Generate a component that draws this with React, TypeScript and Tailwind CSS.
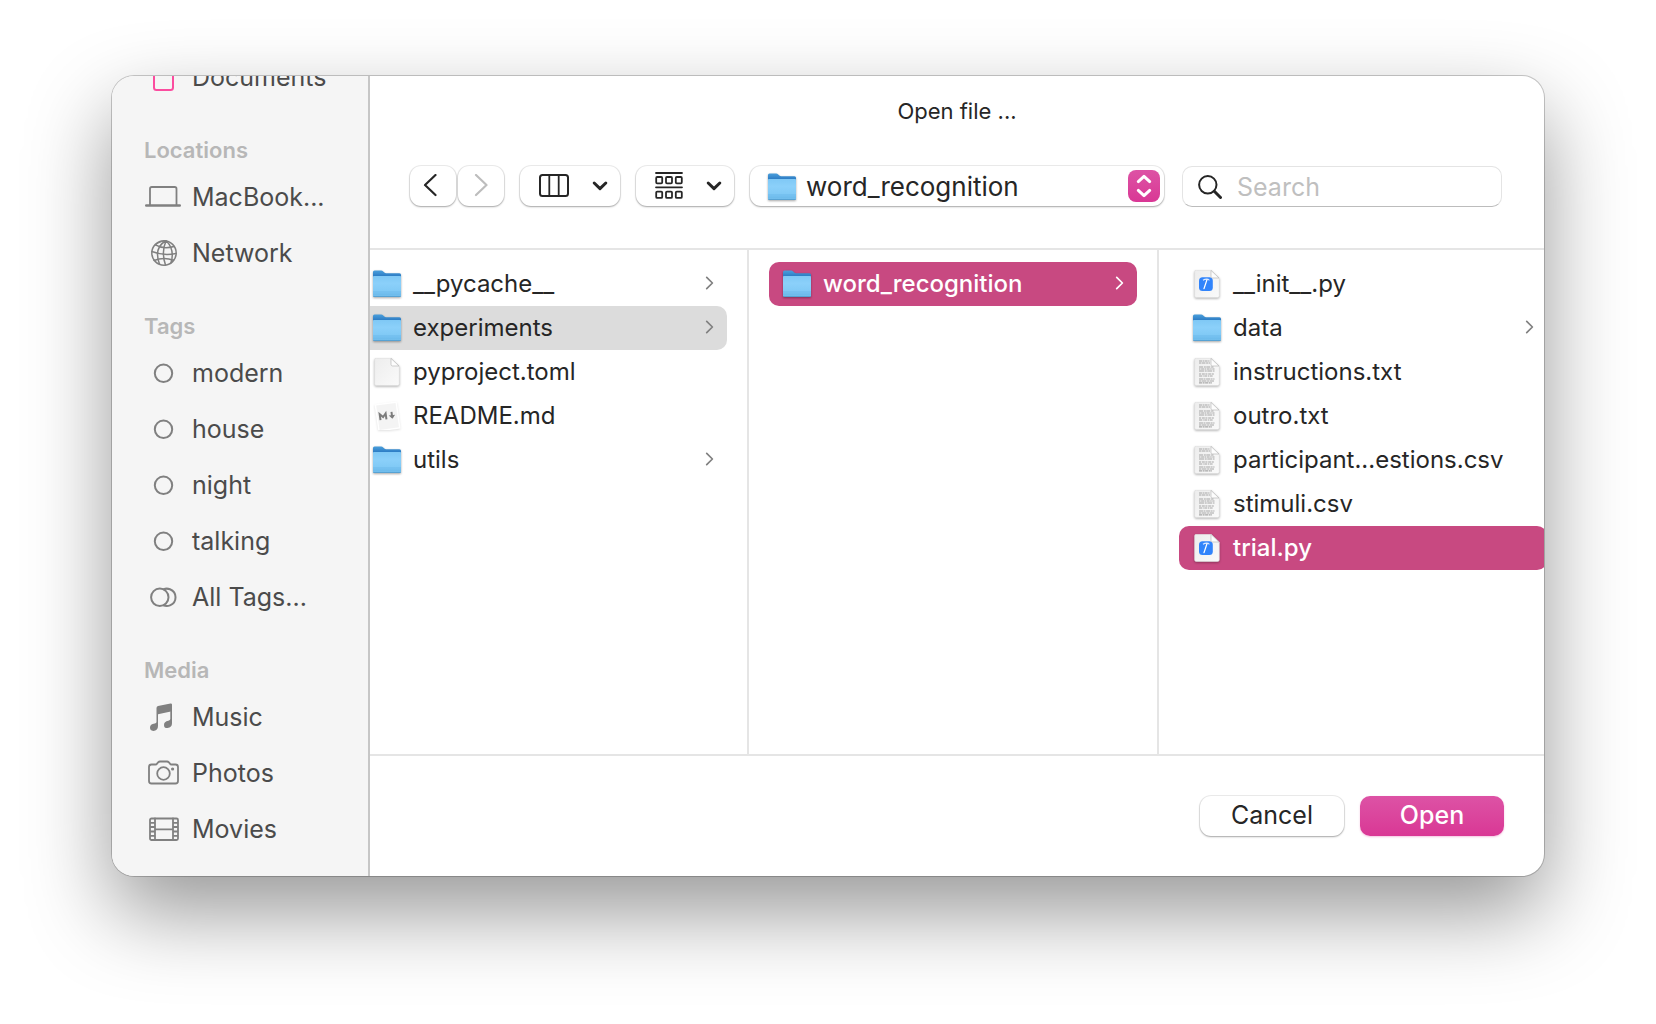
import type { ReactNode } from "react";

type FileKind = "folder" | "blank" | "markdown" | "text" | "python";

interface Entry {
  name: string;
  kind: FileKind;
  state?: "active" | "path";
}

const columns: Entry[][] = [
  [
    { name: "__pycache__", kind: "folder" },
    { name: "experiments", kind: "folder", state: "path" },
    { name: "pyproject.toml", kind: "blank" },
    { name: "README.md", kind: "markdown" },
    { name: "utils", kind: "folder" },
  ],
  [{ name: "word_recognition", kind: "folder", state: "active" }],
  [
    { name: "__init__.py", kind: "python" },
    { name: "data", kind: "folder" },
    { name: "instructions.txt", kind: "text" },
    { name: "outro.txt", kind: "text" },
    { name: "participant...estions.csv", kind: "text" },
    { name: "stimuli.csv", kind: "text" },
    { name: "trial.py", kind: "python", state: "active" },
  ],
];

function FolderIcon() {
  return (
    <svg viewBox="0 0 28 28" className="size-7 shrink-0 drop-shadow-[0_1px_1px_rgba(0,0,0,0.35)]" aria-hidden="true">
      <defs>
        <linearGradient id="folder-back" x1="0" y1="0" x2="0" y2="1">
          <stop offset="0" stopColor="#4a9fdc" />
          <stop offset="0.45" stopColor="#2f7fc6" />
        </linearGradient>
        <linearGradient id="folder-front" x1="0" y1="0" x2="0" y2="1">
          <stop offset="0" stopColor="#7fc8f5" />
          <stop offset="0.35" stopColor="#8bd0fa" />
          <stop offset="0.8" stopColor="#7ec8f5" />
          <stop offset="1" stopColor="#6ab8e8" />
        </linearGradient>
      </defs>
      <path d="M0 2Q0 .5 1.500 .5H8.200Q9.300 .5 10.200 1.400L11.300 2.600Q12 3.300 13.200 3.300H26.500Q28 3.300 28 4.800V12H0Z" fill="url(#folder-back)" />
      <path d="M0 6.800Q0 6 .8 6H27.200Q28 6 28 6.800V25.500Q28 27 26.500 27H1.500Q0 27 0 25.500Z" fill="url(#folder-front)" />
      <path d="M0 22H28M0 24H28" stroke="#5fb0e4" strokeWidth=".6" />
      <path d="M.3 26.600H27.700" stroke="#4b93c6" strokeWidth=".7" />
    </svg>
  );
}

function Page({ children }: { children?: ReactNode }) {
  return (
    <svg viewBox="0 0 28 28" className="size-7 shrink-0 drop-shadow-[0_1px_1px_rgba(0,0,0,0.3)]" aria-hidden="true">
      <defs>
        <linearGradient id="page-fill" x1="0" y1="0" x2="1" y2="1">
          <stop offset="0" stopColor="#ededed" />
          <stop offset="1" stopColor="#fafafa" />
        </linearGradient>
      </defs>
      <path
        d="M3.200 .2H18L26.300 8V25.800Q26.300 27.500 24.600 27.500H3.200Q1.600 27.500 1.600 25.800V1.900Q1.600 .2 3.200 .2Z"
        fill="url(#page-fill)"
        stroke="#dedede"
        strokeWidth=".6"
      />
      {children}
      <path d="M18 .4V6.400Q18 8 19.600 8H26Z" fill="#fdfdfd" stroke="#b9b9b9" strokeWidth=".7" strokeLinejoin="round" />
    </svg>
  );
}

function FileIcon({ kind }: { kind: FileKind }) {
  switch (kind) {
    case "folder":
      return <FolderIcon />;
    case "blank":
      return <Page />;
    case "text":
      return (
        <Page>
          <g stroke="#a6a6a6" strokeWidth="1.200">
            <path d="M6 3H16.500" strokeDasharray="3 .6 1.500 .5" />
            <path d="M6 5H17" strokeDasharray="2 .5 4 .6" />
            <path d="M6 9H21" strokeDasharray="4 .8 2 .5" />
            <path d="M6 11H21.500" strokeDasharray="1.500 .6 3 .5" />
            <path d="M6 13H21.500" strokeDasharray="5 .7 2 .6" />
            <path d="M6 16H21.500" strokeDasharray="2 .8 3 .6" />
            <path d="M6 18H20" strokeDasharray="3 .7 1 .6" />
            <path d="M6 21H21.500" strokeDasharray="4 .5 2 .6" />
            <path d="M6 23H21" strokeDasharray="2 .5 5 .6" />
            <path d="M6 24.800H19" strokeDasharray="3 .6 2 .5" />
          </g>
        </Page>
      );
    case "python":
      return (
        <Page>
          <rect x="6" y="7.200" width="13.800" height="13.800" rx="3.500" fill="#3184fb" />
          <path d="M10 10.200Q12 8.800 15.200 9.200L16.400 10.400" fill="none" stroke="#dfeaff" strokeWidth="1.100" />
          <path d="M14 9.600L11 18.600" stroke="#fff" strokeWidth="1.300" strokeLinecap="round" />
        </Page>
      );
    case "markdown":
      return (
        <svg viewBox="0 0 28 28" className="size-7 shrink-0 drop-shadow-[0_1px_1px_rgba(0,0,0,0.12)]" aria-hidden="true">
          <g transform="rotate(-8 14 14)">
            <rect x="4" y="1.500" width="21" height="26" fill="#f4f4f4" stroke="#fff" strokeWidth="1.400" />
            <path d="M7 17.200V11.200L10 14.400L13 11.200V17.200" fill="none" stroke="#7c7c7c" strokeWidth="2" />
            <path d="M19 10.500V16" fill="none" stroke="#7c7c7c" strokeWidth="2" />
            <path d="M15.800 13.800H22.200L19 17.600Z" fill="#7c7c7c" />
          </g>
        </svg>
      );
  }
}

function Row({ entry }: { entry: Entry }) {
  const tone =
    entry.state === "active"
      ? "bg-[#c84981] font-medium text-white"
      : entry.state === "path"
        ? "bg-[#dcdcdc] text-[#262626]"
        : "text-[#262626]";
  const arrow = entry.state === "active" ? "text-white" : "text-[#808080]";
  return (
    <li>
      <button
        type="button"
        className={`flex h-11 w-full items-center gap-3 rounded-[10px] pr-3 pl-3.5 text-left text-[24px] leading-7 whitespace-nowrap ${tone}`}
      >
        <FileIcon kind={entry.kind} />
        <span className="flex-1">{entry.name}</span>
        {entry.kind === "folder" && (
          <svg viewBox="0 0 12 16" className={`h-4 w-3 ${arrow}`} fill="none" stroke="currentColor" strokeWidth="1.700" aria-hidden="true">
            <path d="M3.700 1.300L9.400 7L3.700 12.700" strokeLinecap="round" strokeLinejoin="round" />
          </svg>
        )}
      </button>
    </li>
  );
}

const line = { fill: "none", stroke: "currentColor", strokeLinecap: "round", strokeLinejoin: "round" } as const;

function SideSvg({ children }: { children: ReactNode }) {
  return (
    <svg viewBox="0 0 36 30" className="h-[30px] w-9 shrink-0" aria-hidden="true">
      {children}
    </svg>
  );
}

const DocumentIcon = () => (
  <SideSvg>
    <rect x="9" y="2" width="19" height="26" rx="2.500" {...line} stroke="#fb4d9f" strokeWidth="2" />
  </SideSvg>
);
const LaptopIcon = () => (
  <SideSvg>
    <path d="M5 23V6.800Q5 5 6.800 5H29.700Q31.500 5 31.500 6.800V23" {...line} strokeWidth="1.800" />
    <path d="M1.200 23.500H34.800" {...line} strokeWidth="2.400" />
  </SideSvg>
);
const GlobeIcon = () => (
  <SideSvg>
    <g {...line} strokeWidth="1.500">
      <circle cx="19" cy="15" r="12.200" />
      <path d="M10.500 6.800Q18 11.500 29 8.500M6.800 13.500Q18 18 31 15.500M9 22.500Q19 18.500 28.500 22.300" />
      <path d="M20.500 3Q8.500 10 14.500 26.200M21 3Q16 14 20.500 27M21.500 3Q30 12 26 24.500" />
      <path d="M20 3Q13 4 10.500 6.800" strokeWidth="1.200" />
    </g>
  </SideSvg>
);
const TagIcon = () => (
  <SideSvg>
    <circle cx="18.500" cy="15.300" r="8.700" {...line} strokeWidth="2" />
  </SideSvg>
);
const AllTagsIcon = () => (
  <SideSvg>
    <circle cx="14.800" cy="15.300" r="8.700" {...line} strokeWidth="2" />
    <path d="M18.500 7.300Q21.500 6 25 7.200A8.700 8.700 0 0 1 25 23.400Q21.500 24.700 18.500 23.300" {...line} strokeWidth="2" />
  </SideSvg>
);
const MusicIcon = () => (
  <SideSvg>
    <path d="M11.500 6Q11.500 4.300 13 4L25.500 1.400Q27 1.200 27 2.600V9.300L13 12.300V24Q13 28.800 8.300 28.900Q5 28.900 5 25.600Q5 22 9.700 21.500Q11.500 21.300 11.500 20Z" fill="currentColor" />
    <path d="M25.300 8L27 8V21.300Q27 25.500 22.500 26.100Q19 26.200 19 22.900Q19 19.400 23.400 18.700Q25.300 18.400 25.300 17Z" fill="currentColor" />
  </SideSvg>
);
const CameraIcon = () => (
  <SideSvg>
    <g {...line} strokeWidth="1.800">
      <path d="M6.500 6.500H10.500Q11.500 6.500 12 5.700L13 4.500Q14 3.500 15 3.500H22Q23 3.500 24 4.500L25 5.700Q25.500 6.500 26.500 6.500H30.500Q33 6.500 33 9V23Q33 25.500 30.500 25.500H6.500Q4 25.500 4 23V9Q4 6.500 6.500 6.500Z" />
      <circle cx="18.500" cy="15.500" r="6.300" />
    </g>
    <circle cx="27.600" cy="11" r="1.600" fill="currentColor" />
  </SideSvg>
);
const FilmIcon = () => (
  <SideSvg>
    <g {...line} strokeWidth="1.800">
      <rect x="5" y="4.500" width="28" height="21.500" rx="1.500" />
      <path d="M10 4.500V26M28 4.500V26M10 15.300H28" />
      <path d="M5 8.800H10M5 13H10M5 17.500H10M5 21.800H10M28 8.800H33M28 13H33M28 17.500H33M28 21.800H33" strokeLinecap="butt" />
    </g>
  </SideSvg>
);

const sections: { title?: string; items: { label: string; Icon: () => ReactNode }[] }[] = [
  { items: [{ label: "Documents", Icon: DocumentIcon }] },
  {
    title: "Locations",
    items: [
      { label: "MacBook...", Icon: LaptopIcon },
      { label: "Network", Icon: GlobeIcon },
    ],
  },
  {
    title: "Tags",
    items: [
      { label: "modern", Icon: TagIcon },
      { label: "house", Icon: TagIcon },
      { label: "night", Icon: TagIcon },
      { label: "talking", Icon: TagIcon },
      { label: "All Tags...", Icon: AllTagsIcon },
    ],
  },
  {
    title: "Media",
    items: [
      { label: "Music", Icon: MusicIcon },
      { label: "Photos", Icon: CameraIcon },
      { label: "Movies", Icon: FilmIcon },
    ],
  },
];

/* The list is scrolled to its end, so the first entry is partly hidden. */
function Sidebar() {
  return (
    <nav
      aria-label="Favourites"
      className="flex w-[258px] shrink-0 flex-col justify-end overflow-hidden border-r-2 border-[#c6c6c6] bg-[#f5f5f5] pb-[19px] pl-8"
    >
      {sections.map((section) => (
        <section key={section.title ?? "top"}>
          {section.title && (
            <h2 className="flex h-16 items-end pb-[5px] text-[22px] leading-7 font-semibold text-[#b7b7b7]">{section.title}</h2>
          )}
          <ul>
            {section.items.map(({ label, Icon }) => (
              <li key={label}>
                <button type="button" className="flex h-14 w-full items-center gap-[11px] pl-px text-left text-[25px] leading-8 whitespace-nowrap text-[#4b4b4b]">
                  <span className="text-[#808080]">
                    <Icon />
                  </span>
                  {label}
                </button>
              </li>
            ))}
          </ul>
        </section>
      ))}
    </nav>
  );
}

const control =
  "h-10 rounded-[11px] bg-white shadow-[0_0_0_1px_rgba(0,0,0,0.07),0_1px_2px_rgba(0,0,0,0.3)]";

function DownCaret() {
  return (
    <svg viewBox="0 0 16 12" className="h-3 w-4" {...line} strokeWidth="3" aria-hidden="true">
      <path d="M2.200 3L8 8.600L13.800 3" />
    </svg>
  );
}

function Toolbar() {
  return (
    <div className="flex pr-[42px] pl-10 text-[#262626]">
      <div className="flex gap-0.5">
        <button type="button" aria-label="Back" className={`${control} flex w-[46px] items-center justify-center`}>
          <svg viewBox="0 0 24 24" className="size-6" {...line} strokeWidth="2.200" aria-hidden="true">
            <path d="M14.500 1L4 11L14.500 21" />
          </svg>
        </button>
        <button type="button" aria-label="Forward" disabled className={`${control} flex w-[46px] items-center justify-center text-[#bdbdbd]`}>
          <svg viewBox="0 0 24 24" className="size-6" {...line} strokeWidth="2.200" aria-hidden="true">
            <path d="M7 1L17.500 11L7 21" />
          </svg>
        </button>
      </div>
      <button type="button" aria-label="View as columns" aria-haspopup="menu" className={`${control} ml-4 flex w-[100px] items-center justify-between pr-3 pl-[19px]`}>
        <svg viewBox="0 0 30 24" className="h-6 w-[30px]" {...line} strokeWidth="2" aria-hidden="true">
          <rect x="1" y="1" width="28" height="21" rx="2.500" />
          <path d="M10.300 1V22M19.700 1V22" strokeWidth="1.800" />
        </svg>
        <DownCaret />
      </button>
      <button type="button" aria-label="Group by" aria-haspopup="menu" className={`${control} ml-4 flex w-[98px] items-center justify-between pr-3 pl-[19px]`}>
        <svg viewBox="0 0 28 28" className="size-7" {...line} strokeWidth="1.800" aria-hidden="true">
          <path d="M1 1H27M1 15.300H27" />
          <rect x="1.200" y="5" width="6" height="6.300" rx="1" />
          <rect x="11" y="5" width="6" height="6.300" rx="1" />
          <rect x="20.800" y="5" width="6" height="6.300" rx="1" />
          <rect x="1.200" y="19.600" width="6" height="6.300" rx="1" />
          <rect x="11" y="19.600" width="6" height="6.300" rx="1" />
          <rect x="20.800" y="19.600" width="6" height="6.300" rx="1" />
        </svg>
        <DownCaret />
      </button>
      <div className={`${control} relative ml-4 flex-1`}>
        <span className="pointer-events-none absolute top-[7px] left-[18px]">
          <FolderIcon />
        </span>
        <select aria-label="Folder" className="h-10 w-full appearance-none rounded-[11px] pl-14 text-[26px] outline-none">
          <option>word_recognition</option>
        </select>
        <span className="pointer-events-none absolute top-1 right-1 flex size-8 items-center justify-center rounded-lg bg-linear-to-b from-[#dd52a5] to-[#d93795] text-white">
          <svg viewBox="0 0 24 24" className="size-6" {...line} strokeWidth="3" aria-hidden="true">
            <path d="M6.300 7.600L12 2.400L17.700 7.600M6.300 16.400L12 21.600L17.700 16.400" />
          </svg>
        </span>
      </div>
      <label className="ml-[18px] flex h-[41px] w-[320px] items-center gap-[15px] rounded-[10px] border border-[#e4e4e4] border-b-[#bcbcbc] pr-3 pl-[15px]">
        <svg viewBox="0 0 24 24" className="size-6 shrink-0" {...line} aria-hidden="true">
          <circle cx="9.800" cy="9.800" r="8.700" strokeWidth="2" />
          <path d="M16.300 16.300L22.500 22.500" strokeWidth="3" />
        </svg>
        <input
          type="search"
          aria-label="Search"
          placeholder="Search"
          className="w-full min-w-0 text-[25px] leading-8 outline-none placeholder:text-[#bfbfbf]"
        />
      </label>
    </div>
  );
}

export default function App() {
  return (
    <div className="flex h-screen overflow-hidden bg-white px-28 pt-[76px] pb-[148px] font-[Inter,sans-serif]">
      <div
        role="dialog"
        aria-labelledby="dialog-title"
        className="flex min-w-0 flex-1 overflow-hidden rounded-[22px] bg-white shadow-[0_0_0_1px_rgba(0,0,0,0.2),0_36px_84px_rgba(0,0,0,0.41)]"
      >
        <Sidebar />
        <main className="flex min-w-0 flex-1 flex-col">
          <header className="border-b-2 border-[#e5e5e5] pt-[21px] pb-[41px]">
            <h1 id="dialog-title" className="pb-[41px] text-center text-[22px] leading-7 text-[#262626]">
              Open file ...
            </h1>
            <Toolbar />
          </header>
          <div className="min-h-0 flex-1 overflow-hidden">
            <div className="-ml-[31px] flex h-full">
              {columns.map((entries, i) => (
                <ul key={i} className="w-[410px] shrink-0 border-r-2 border-[#e5e5e5] px-5 py-3">
                  {entries.map((entry) => (
                    <Row key={entry.name} entry={entry} />
                  ))}
                </ul>
              ))}
            </div>
          </div>
          <footer className="flex justify-end gap-4 border-t-2 border-[#e5e5e5] p-10 text-[25px] leading-8">
            <button type="button" className={`${control} w-36 pb-0.5 text-[#262626]`}>
              Cancel
            </button>
            <button
              type="button"
              className="h-10 w-36 rounded-[10px] bg-linear-to-b from-[#dd52a5] to-[#d93795] pb-0.5 font-medium text-white shadow-[0_1px_2px_rgba(217,55,149,0.3)]"
            >
              Open
            </button>
          </footer>
        </main>
      </div>
    </div>
  );
}
